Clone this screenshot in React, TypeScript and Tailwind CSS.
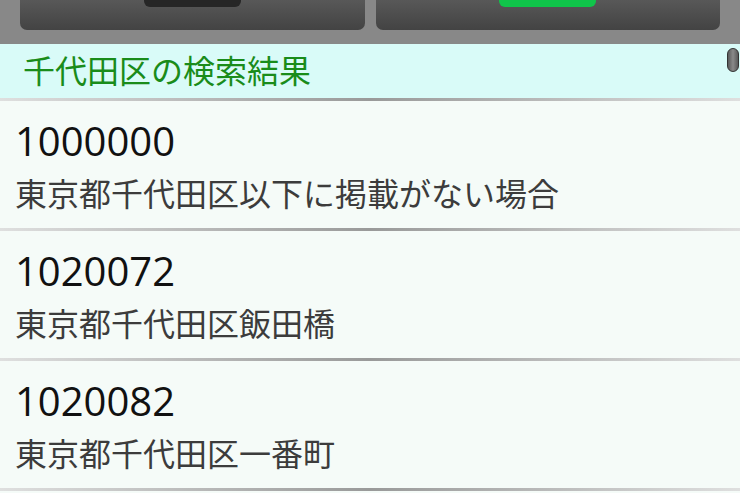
const results = [
  { code: "1000000", address: "東京都千代田区以下に掲載がない場合" },
  { code: "1020072", address: "東京都千代田区飯田橋" },
  { code: "1020082", address: "東京都千代田区一番町" },
];

const jp = { fontFamily: '"Noto Sans CJK JP", "Noto Sans", sans-serif' };

function Divider() {
  return (
    <div className="h-[3px] w-full bg-linear-to-r from-[#dcdcdc] via-[#8f8f8f] to-[#dcdcdc] opacity-90" />
  );
}

export default function App() {
  return (
    <div className="relative h-[493px] w-[740px] overflow-hidden bg-[#f5fbf8]">
      {/* top toolbar (scrolled so only the bottom of the buttons shows) */}
      <div className="flex h-[44px] gap-[11px] bg-[#888888] px-[20px]">
        <div className="flex h-[30px] flex-1 justify-center rounded-b-[7px] bg-linear-to-b from-[#585858] to-[#434343]">
          <div className="h-[7px] w-[97px] rounded-b-[6px] bg-[#262626]" />
        </div>
        <div className="flex h-[30px] flex-1 justify-center rounded-b-[7px] bg-linear-to-b from-[#585858] to-[#434343]">
          <div className="h-[7px] w-[97px] rounded-b-[6px] bg-[#10c44a]" />
        </div>
      </div>

      {/* section header */}
      <div
        className="h-[54px] bg-[#d9fbf8] pl-[23px] text-[32px] leading-[51px] text-[#1a8c1a]"
        style={jp}
      >
        千代田区の検索結果
      </div>
      <Divider />

      {results.map((r) => (
        <div key={r.code}>
          <div className="h-[127px] pl-[15px] pt-[16px]">
            <div
              className="text-[40px] leading-[48px] text-[#111111]"
              style={{ fontFamily: '"Open Sans", "Noto Sans", sans-serif' }}
            >
              {r.code}
            </div>
            <div className="mt-[7px] text-[32px] leading-[40px] text-[#3c3c3c]" style={jp}>
              {r.address}
            </div>
          </div>
          <Divider />
        </div>
      ))}

      {/* scrollbar thumb */}
      <div className="absolute left-[727px] top-[48px] h-[24px] w-[12px] rounded-full border border-[#333333] bg-linear-to-r from-[#5a5a5a] via-[#8a8a8a] to-[#5a5a5a]" />
    </div>
  );
}
